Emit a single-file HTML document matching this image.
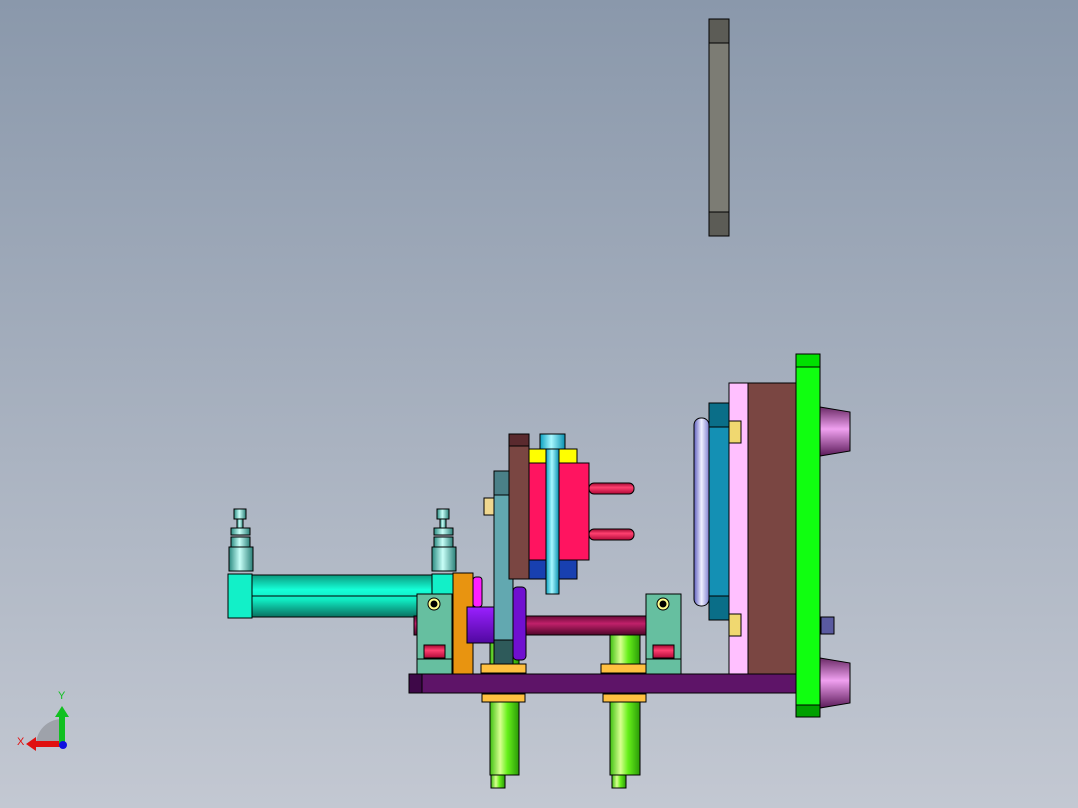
<!DOCTYPE html>
<html><head><meta charset="utf-8"><style>
html,body{margin:0;padding:0;width:1078px;height:808px;overflow:hidden}
svg{display:block}
</style></head><body>
<svg width="1078" height="808" viewBox="0 0 1078 808" xmlns="http://www.w3.org/2000/svg">
<defs>
<linearGradient id="bg" x1="0" y1="0" x2="0" y2="1"><stop offset="0" stop-color="#8a98ab"/><stop offset="1" stop-color="#c3c8d2"/></linearGradient>
<linearGradient id="cyl" x1="0" y1="0" x2="0" y2="1"><stop offset="0" stop-color="#0a9a7e"/><stop offset=".35" stop-color="#15ffd8"/><stop offset=".6" stop-color="#10e8c0"/><stop offset="1" stop-color="#087060"/></linearGradient>
<linearGradient id="grn" x1="0" y1="0" x2="1" y2="0"><stop offset="0" stop-color="#3fc010"/><stop offset=".35" stop-color="#d8ff90"/><stop offset=".6" stop-color="#66f01a"/><stop offset="1" stop-color="#2a9a08"/></linearGradient>
<linearGradient id="rod" x1="0" y1="0" x2="0" y2="1"><stop offset="0" stop-color="#6a0a38"/><stop offset=".4" stop-color="#c0206a"/><stop offset="1" stop-color="#50062a"/></linearGradient>
<linearGradient id="cyan" x1="0" y1="0" x2="1" y2="0"><stop offset="0" stop-color="#0aa0c0"/><stop offset=".45" stop-color="#a8f8ff"/><stop offset="1" stop-color="#0890b0"/></linearGradient>
<linearGradient id="cone" x1="0" y1="0" x2="0" y2="1"><stop offset="0" stop-color="#6a2a66"/><stop offset=".45" stop-color="#f0a0f0"/><stop offset="1" stop-color="#5a1a58"/></linearGradient>
<linearGradient id="pin" x1="0" y1="0" x2="0" y2="1"><stop offset="0" stop-color="#a00830"/><stop offset=".4" stop-color="#ff4070"/><stop offset="1" stop-color="#b00a38"/></linearGradient>
<linearGradient id="valve" x1="0" y1="0" x2="1" y2="0"><stop offset="0" stop-color="#2a8a80"/><stop offset=".45" stop-color="#c8fff8"/><stop offset="1" stop-color="#2a8078"/></linearGradient>
<linearGradient id="lav" x1="0" y1="0" x2="1" y2="0"><stop offset="0" stop-color="#6060c0"/><stop offset=".5" stop-color="#f0f0ff"/><stop offset="1" stop-color="#8080d0"/></linearGradient>
<linearGradient id="purp" x1="0" y1="0" x2="0" y2="1"><stop offset="0" stop-color="#9a20ff"/><stop offset="1" stop-color="#5008a0"/></linearGradient>
</defs>
<rect width="1078" height="808" fill="url(#bg)"/>
<g stroke="#000" stroke-width="1">
<rect x="709" y="19" width="20" height="217" fill="#7c7c74"/>
<rect x="709" y="19" width="20" height="24" fill="#5c5c56"/>
<rect x="709" y="212" width="20" height="24" fill="#5c5c56"/>
<path d="M820 407 L850 412 L850 451 L820 456 Z" fill="url(#cone)"/>
<path d="M820 658 L850 663 L850 703 L820 708 Z" fill="url(#cone)"/>
<rect x="821" y="617" width="13" height="17" fill="#5a5aa0"/>
<rect x="694" y="418" width="15" height="188" rx="7" fill="url(#lav)"/>
<rect x="709" y="403" width="20" height="217" fill="#1490b4"/>
<rect x="709" y="403" width="20" height="24" fill="#0a6e88"/>
<rect x="709" y="596" width="20" height="24" fill="#0a6e88"/>
<rect x="729" y="383" width="19" height="291" fill="#ffc0ff"/>
<rect x="729" y="421" width="12" height="22" fill="#f0d870"/>
<rect x="729" y="614" width="12" height="22" fill="#f0d870"/>
<rect x="748" y="383" width="48" height="291" fill="#7a4642"/>
<rect x="252" y="575" width="180" height="42" fill="url(#cyl)"/>
<line x1="252" y1="596" x2="432" y2="596"/>
<rect x="228" y="574" width="24" height="44" fill="#12f0c8"/>
<rect x="432" y="574" width="21" height="26" fill="#12f0c8"/>
<g fill="url(#valve)">
<rect x="234" y="509" width="12" height="10"/><rect x="237" y="519" width="6" height="10"/>
<rect x="231" y="528" width="19" height="7"/><rect x="231" y="537" width="19" height="11"/>
<rect x="229" y="547" width="24" height="24"/>
<rect x="437" y="509" width="12" height="10"/><rect x="440" y="519" width="6" height="10"/>
<rect x="434" y="528" width="19" height="7"/><rect x="434" y="537" width="19" height="11"/>
<rect x="432" y="547" width="24" height="24"/>
</g>
<rect x="490" y="635" width="29" height="30" fill="url(#grn)"/>
<rect x="610" y="635" width="30" height="30" fill="url(#grn)"/>
<rect x="490" y="702" width="29" height="73" fill="url(#grn)"/>
<rect x="491" y="775" width="14" height="13" fill="url(#grn)"/>
<rect x="610" y="702" width="30" height="73" fill="url(#grn)"/>
<rect x="612" y="775" width="14" height="13" fill="url(#grn)"/>
<rect x="414" y="616" width="233" height="19" fill="url(#rod)"/>
<rect x="453" y="573" width="20" height="101" fill="#e89410"/>
<rect x="473" y="577" width="9" height="30" rx="3" fill="#ff20ff"/>
<rect x="484" y="498" width="10" height="17" fill="#f0d890"/>
<rect x="494" y="471" width="19" height="194" fill="#62a8b0"/>
<rect x="494" y="471" width="19" height="24" fill="#4a8088"/>
<rect x="494" y="640" width="19" height="25" fill="#2e5a5a"/>
<rect x="467" y="607" width="27" height="36" fill="url(#purp)"/>
<rect x="513" y="587" width="13" height="73" rx="4" fill="#7010d0"/>
<rect x="589" y="483" width="45" height="11" rx="5" fill="url(#pin)"/>
<rect x="589" y="529" width="45" height="11" rx="5" fill="url(#pin)"/>
<rect x="529" y="463" width="60" height="97" fill="#ff1460"/>
<rect x="529" y="449" width="48" height="14" fill="#ffff00"/>
<rect x="529" y="560" width="48" height="19" fill="#1840b0"/>
<rect x="546" y="434" width="13" height="160" fill="url(#cyan)"/>
<rect x="540" y="434" width="25" height="15" fill="url(#cyan)"/>
<rect x="509" y="434" width="20" height="145" fill="#7a4642"/>
<rect x="509" y="434" width="20" height="12" fill="#5a2a2e"/>
<rect x="417" y="594" width="35" height="80" fill="#66bfa0"/>
<rect x="646" y="594" width="35" height="80" fill="#66bfa0"/>
<rect x="424" y="645" width="21" height="13" fill="url(#pin)"/>
<rect x="653" y="645" width="21" height="13" fill="url(#pin)"/>
<line x1="417" y1="659" x2="452" y2="659"/><line x1="646" y1="659" x2="681" y2="659"/>
<circle cx="434" cy="604" r="6" fill="#ffff90"/><circle cx="434" cy="604" r="3" fill="#000"/>
<circle cx="663" cy="604" r="6" fill="#ffff90"/><circle cx="663" cy="604" r="3" fill="#000"/>
<rect x="481" y="664" width="45" height="9" fill="#ffc040"/>
<rect x="601" y="664" width="45" height="9" fill="#ffc040"/>
<rect x="482" y="694" width="43" height="8" fill="#ffc040"/>
<rect x="603" y="694" width="43" height="8" fill="#ffc040"/>
<rect x="409" y="674" width="387" height="19" fill="#5e1468"/>
<rect x="409" y="674" width="13" height="19" fill="#3e0848"/>
<rect x="796" y="354" width="24" height="363" fill="#10ff10"/>
<rect x="796" y="354" width="24" height="13" fill="#00e000"/>
<rect x="796" y="705" width="24" height="12" fill="#00a000"/>
</g>
<path d="M62 745 L36 745 A26 26 0 0 1 62 719 Z" fill="#9ea2aa"/>
<rect x="34" y="741" width="28" height="6" fill="#e01010"/>
<path d="M26 744 L36 737 L36 751 Z" fill="#e01010"/>
<rect x="59" y="716" width="6" height="29" fill="#10c020"/>
<path d="M62 706 L55 717 L69 717 Z" fill="#10c020"/>
<circle cx="63" cy="745" r="4" fill="#1010e0"/>
<text x="17" y="745" font-family="Liberation Sans, sans-serif" font-size="11" fill="#e01010">X</text>
<text x="58" y="699" font-family="Liberation Sans, sans-serif" font-size="11" fill="#10c020">Y</text>
</svg>
</body></html>
